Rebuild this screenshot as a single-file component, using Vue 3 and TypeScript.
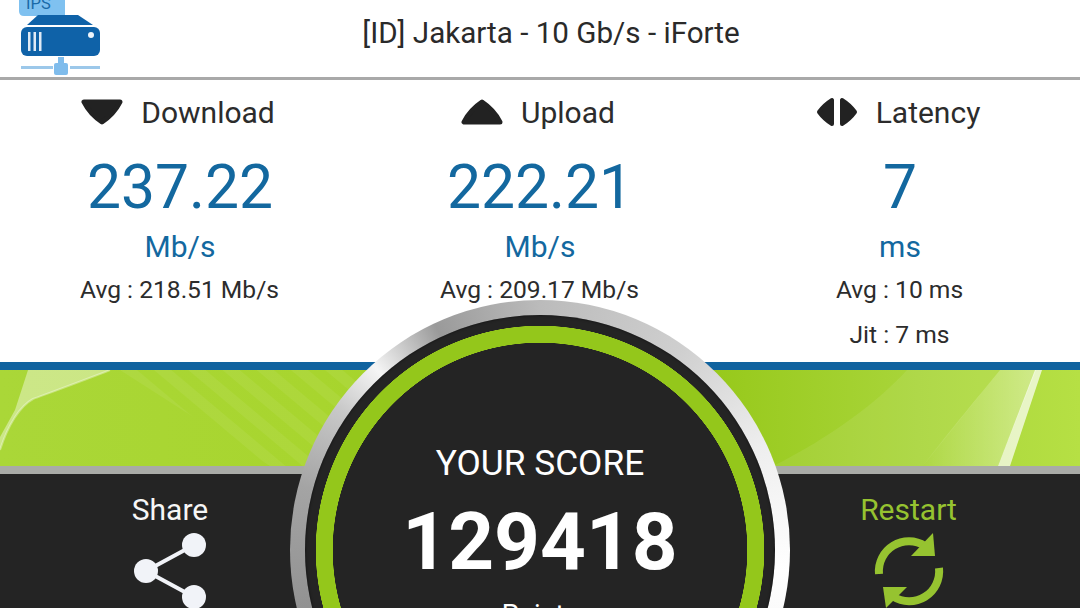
<script setup lang="ts">
interface Stat {
  label: string
  icon: 'down' | 'up' | 'latency'
  value: string
  unit: string
  notes: string[]
}

const stats: Stat[] = [
  { label: 'Download', icon: 'down', value: '237.22', unit: 'Mb/s', notes: ['Avg : 218.51 Mb/s'] },
  { label: 'Upload', icon: 'up', value: '222.21', unit: 'Mb/s', notes: ['Avg : 209.17 Mb/s'] },
  { label: 'Latency', icon: 'latency', value: '7', unit: 'ms', notes: ['Avg : 10 ms', 'Jit : 7 ms'] }
]
</script>

<template>
  <div class="page">
    <header class="header">
      <svg class="logo" viewBox="0 0 102 78" width="102" height="78">
        <path d="M19 -8 H65 V16 H24 Q19 16 19 11 Z" fill="#7fc1f0" />
        <text x="26" y="9" class="logo__text">IPS</text>
        <path d="M27 25 L38 15 H78 L93 25 Z" fill="#0f62a8" />
        <rect x="21" y="27" width="79" height="29" rx="6" fill="#0f62a8" />
        <path d="M28 32h2.500v19H28zM33.500 32H36v19h-2.500zM39 32h2.500v19H39z" fill="#dfeaf5" />
        <circle cx="91" cy="35" r="3" fill="#eef4fa" />
        <rect x="58" y="57" width="6" height="7" fill="#7fbcec" />
        <rect x="54" y="63" width="14" height="12" rx="2" fill="#7fbcec" />
        <rect x="21" y="66" width="32" height="3" fill="#9cc8ea" />
        <rect x="70" y="66" width="30" height="3" fill="#9cc8ea" />
      </svg>
      <h1 class="header__title">[ID] Jakarta - 10 Gb/s - iForte</h1>
    </header>

    <section class="stats">
      <div v-for="stat in stats" :key="stat.label" class="stat">
        <div class="stat__label">
          <svg v-if="stat.icon === 'down'" class="stat__icon" viewBox="0 0 42 26" width="42" height="26">
            <path d="M3 3 H39 Q33 15 21 23 Q9 15 3 3 Z" fill="#222" stroke="#222" stroke-width="5" stroke-linejoin="round" />
          </svg>
          <svg v-else-if="stat.icon === 'up'" class="stat__icon" viewBox="0 0 42 26" width="42" height="26">
            <path d="M3 23 H39 Q33 11 21 3 Q9 11 3 23 Z" fill="#222" stroke="#222" stroke-width="5" stroke-linejoin="round" />
          </svg>
          <svg v-else class="stat__icon" viewBox="0 0 42 30" width="42" height="30">
            <path d="M16 3 V27 Q8 22 3 15 Q8 8 16 3 Z M26 3 V27 Q34 22 39 15 Q34 8 26 3 Z" fill="#222" stroke="#222" stroke-width="4" stroke-linejoin="round" />
          </svg>
          <span>{{ stat.label }}</span>
        </div>
        <div class="stat__value">{{ stat.value }}</div>
        <div class="stat__unit">{{ stat.unit }}</div>
        <div class="stat__notes">
          <div v-for="note in stat.notes" :key="note" class="stat__note">{{ note }}</div>
        </div>
      </div>
    </section>

    <div class="rule"></div>

    <svg class="band" viewBox="0 0 1080 96" width="1080" height="96" preserveAspectRatio="none">
      <defs>
        <linearGradient id="bandFill" x1="0" y1="0" x2="1" y2="0">
          <stop offset="0" stop-color="#aad738" />
          <stop offset="0.3" stop-color="#a8d52e" />
          <stop offset="0.66" stop-color="#97c91b" />
          <stop offset="0.85" stop-color="#a9d53a" />
          <stop offset="1" stop-color="#b6e044" />
        </linearGradient>
        <linearGradient id="bandFan" gradientUnits="userSpaceOnUse" x1="923" y1="0" x2="1037" y2="0">
          <stop offset="0" stop-color="#ffffff" stop-opacity="0.06" />
          <stop offset="1" stop-color="#ffffff" stop-opacity="0.38" />
        </linearGradient>
        <pattern id="bandStripes" width="22" height="22" patternUnits="userSpaceOnUse" patternTransform="rotate(40)">
          <rect width="22" height="11" fill="#ffffff" fill-opacity="0.06" />
        </pattern>
      </defs>
      <rect width="1080" height="96" fill="url(#bandFill)" />
      <path d="M120 0 H360 V60 L310 96 H270 Z" fill="url(#bandStripes)" />
      <path d="M28 0 H110 C90 8 60 19 33 29 C20 36 8 55 0 80 V67 L15 40 Z" fill="#ffffff" fill-opacity="0.4" />
      <path d="M0 80 C8 55 20 36 33 29 C60 19 90 8 110 0" fill="none" stroke="#ffffff" stroke-opacity="0.35" stroke-width="2" />
      <path d="M773 96 C830 68 880 30 907 0 H1000 L923 96 Z" fill="#ffffff" fill-opacity="0.08" />
      <path d="M923 96 C950 60 980 25 1000 0 H1036 L998 96 Z" fill="url(#bandFan)" />
      <path d="M998 96 L1035 0 H1042 L1010 96 Z" fill="#ffffff" fill-opacity="0.7" />
    </svg>

    <div class="divider"></div>

    <footer class="footer">
      <div class="action">
        <span class="action__label">Share</span>
        <svg class="action__icon" viewBox="130 530 80 78" width="80" height="78">
          <path d="M194 545 L146 571 L194 597" fill="none" stroke="#f1f3f8" stroke-width="4" />
          <circle cx="194" cy="545" r="12" fill="#f1f3f8" />
          <circle cx="146" cy="571" r="12" fill="#f1f3f8" />
          <circle cx="194" cy="597" r="12" fill="#f1f3f8" />
        </svg>
      </div>
      <div class="action action--restart">
        <span class="action__label">Restart</span>
        <svg class="action__icon" viewBox="869 530 80 78" width="80" height="78">
          <path d="M879 574 A30 30 0 0 1 925 546" fill="none" stroke="#96c330" stroke-width="8" />
          <path d="M933 533 L935 556 L911 556 Z" fill="#96c330" />
          <path d="M939 568 A30 30 0 0 1 893 596.500" fill="none" stroke="#96c330" stroke-width="8" />
          <path d="M883 587 L907 587 L886 608 Z" fill="#96c330" />
        </svg>
      </div>
    </footer>

    <div class="gauge">
      <div class="gauge__inner">
        <div class="gauge__title">YOUR SCORE</div>
        <div class="gauge__score">129418</div>
        <div class="gauge__unit">Points</div>
      </div>
    </div>
  </div>
</template>

<style scoped>
.page {
  position: relative;
  width: 1080px;
  height: 608px;
  overflow: hidden;
  background: #fff;
  font-family: Roboto, "Liberation Sans", sans-serif;
  display: flex;
  flex-direction: column;
}

.header {
  position: relative;
  height: 80px;
  flex-shrink: 0;
  display: flex;
  align-items: center;
  justify-content: center;
  padding: 0 0 11px 22px;
  box-sizing: border-box;
  border-bottom: 3px solid #a9a9a9;
}

.logo {
  position: absolute;
  left: 0;
  top: 0;
}

.logo__text {
  font-size: 16.500px;
  fill: #1a6aa8;
}

.header__title {
  margin: 0;
  font-size: 29.600px;
  font-weight: 400;
  color: #2a2a2a;
}

.stats {
  display: grid;
  grid-template-columns: repeat(3, 360px);
  height: 282px;
  flex-shrink: 0;
}

.stat {
  display: flex;
  flex-direction: column;
  align-items: center;
  padding-top: 15px;
  box-sizing: border-box;
}

.stat__label {
  display: flex;
  align-items: center;
  gap: 18px;
  height: 34px;
  padding-right: 4px;
  font-size: 30px;
  color: #2c2c2c;
}

.stat__value {
  margin-top: 21px;
  font-size: 60.600px;
  line-height: 75px;
  color: #13689f;
}

.stat__unit {
  font-size: 30px;
  line-height: 44px;
  color: #13689f;
}

.stat__notes {
  margin-top: -2px;
  display: flex;
  flex-direction: column;
  align-items: center;
}

.stat__note {
  font-size: 24.600px;
  line-height: 45px;
  padding-right: 1px;
  color: #2c2c2c;
}

.rule {
  height: 8px;
  flex-shrink: 0;
  background: #10639f;
}

.band {
  display: block;
  flex-shrink: 0;
}

.divider {
  height: 8px;
  flex-shrink: 0;
  background: #a9aba7;
}

.footer {
  flex: 1;
  display: grid;
  grid-template-columns: 340px 1fr 342px;
  padding-top: 18px;
  background: #242424;
}

.action {
  display: flex;
  flex-direction: column;
  align-items: center;
  grid-column: 1;
}

.action--restart {
  grid-column: 3;
  padding-right: 1px;
}

.action__label {
  font-size: 30px;
  line-height: 36px;
  color: #f6f6f6;
}

.action--restart .action__label {
  color: #96c330;
}

.action__icon {
  display: block;
  margin-top: 2px;
  overflow: visible;
}

.gauge {
  position: absolute;
  left: 290px;
  top: 300px;
  width: 500px;
  height: 500px;
  box-sizing: border-box;
  padding: 15px;
  border-radius: 50%;
  background: conic-gradient(from 0deg, #bbbbbb 0deg, #cfcfcf 35deg, #eeeeee 65deg, #ffffff 95deg, #f0f0f0 130deg, #bbb 190deg, #8e8e8e 250deg, #a4a4a4 285deg, #c8c8c8 305deg, #f5f5f5 318deg, #9a9a9a 335deg, #bbbbbb 360deg);
}

.gauge__inner {
  width: 470px;
  height: 470px;
  box-sizing: border-box;
  padding-top: 126px;
  border-radius: 50%;
  background: radial-gradient(circle at center, #242424 0 207px, #94c71b 207.500px 224px, #242424 224.500px);
  box-shadow: inset 0 0 3px rgba(0, 0, 0, 0.6);
  text-align: center;
  color: #fff;
}

.gauge__title {
  font-size: 35.300px;
  line-height: 44px;
}

.gauge__score {
  margin-top: 10px;
  font-size: 80px;
  line-height: 94px;
  font-weight: 700;
}

.gauge__unit {
  margin-top: 8px;
  font-size: 27px;
  line-height: 36px;
}
</style>
